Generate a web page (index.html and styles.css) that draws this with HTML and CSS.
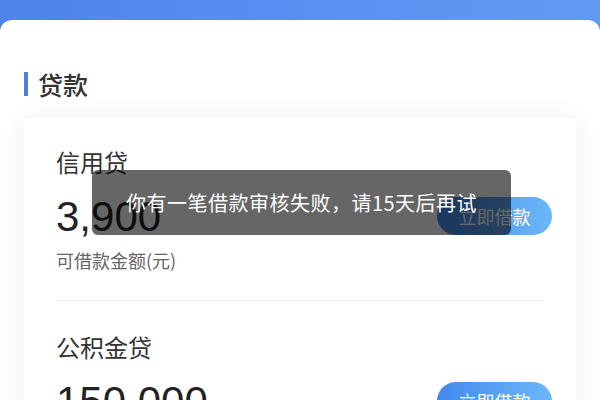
FILE: index.html
```html
<!DOCTYPE html>
<html lang="zh-CN">
<head>
<meta charset="utf-8">
<title>贷款</title>
<link rel="stylesheet" href="styles.css">
</head>
<body>
<div class="top"></div>
<div class="panel">
  <div class="title-row">
    <span class="title-bar"></span>
    <h2 class="title">贷款</h2>
  </div>
  <div class="card">
    <div class="loan">
      <div class="loan-name">信用贷</div>
      <div class="loan-row">
        <div class="amount">3,900</div>
        <button class="btn">立即借款</button>
      </div>
      <div class="loan-label">可借款金额(元)</div>
    </div>
    <div class="divider"></div>
    <div class="loan">
      <div class="loan-name">公积金贷</div>
      <div class="loan-row">
        <div class="amount">150,000</div>
        <button class="btn">立即借款</button>
      </div>
      <div class="loan-label">可借款金额(元)</div>
    </div>
  </div>
</div>
<div class="toast">你有一笔借款审核失败，请15天后再试</div>
</body>
</html>
```
FILE: styles.css
```css
html, body {
  margin: 0;
  padding: 0;
  height: 100%;
  overflow: hidden;
}
body {
  background: linear-gradient(90deg, #4f82ea 0%, #5a93f2 60%, #6199f3 100%);
  font-family: "Noto Sans CJK SC", "Liberation Sans", sans-serif;
  color: #333;
  position: relative;
}
.top {
  height: 20px;
}
.panel {
  background: #fff;
  border-radius: 12px 12px 0 0;
  padding: 52px 24px 0 24px;
  min-height: 400px;
}
.title-row {
  display: flex;
  align-items: center;
  gap: 10px;
}
.title-bar {
  width: 4px;
  height: 24px;
  background: #4a7fe6;
}
.title {
  margin: 0;
  font-size: 25px;
  line-height: 24px;
  font-weight: 500;
  color: #333;
}
.card {
  margin-top: 22px;
  background: #fff;
  padding: 0 24px 0 32px;
  box-shadow: 0 2px 26px rgba(0, 0, 0, 0.07);
}
.loan {
  padding-top: 32px;
}
.divider + .loan {
  padding-top: 34px;
}
.loan-name {
  font-size: 24px;
  line-height: 24px;
  color: #333;
}
.loan-row {
  margin-top: 23px;
  display: flex;
  align-items: center;
  justify-content: space-between;
  height: 38px;
}
.amount {
  font-family: "Liberation Sans", sans-serif;
  font-size: 42px;
  line-height: 38px;
  color: #222;
  padding-top: 2px;
}
.btn {
  width: 115px;
  height: 38px;
  border: none;
  border-radius: 19px;
  background: linear-gradient(90deg, #4489ec 0%, #6cb8f8 100%);
  color: #fff;
  font-family: "Noto Sans CJK SC", sans-serif;
  font-size: 18px;
  line-height: 38px;
  padding: 0;
}
.loan-label {
  margin-top: 16px;
  font-size: 18px;
  line-height: 18px;
  color: #666;
}
.divider {
  margin-top: 31px;
  margin-right: 8px;
  height: 1px;
  background: #eeeeee;
}
.toast {
  position: absolute;
  left: 92px;
  top: 170px;
  width: 419px;
  height: 65px;
  border-radius: 6px;
  background: rgba(0, 0, 0, 0.6);
  color: #fff;
  font-size: 20px;
  letter-spacing: 0.5px;
  display: flex;
  align-items: center;
  justify-content: center;
}
```
